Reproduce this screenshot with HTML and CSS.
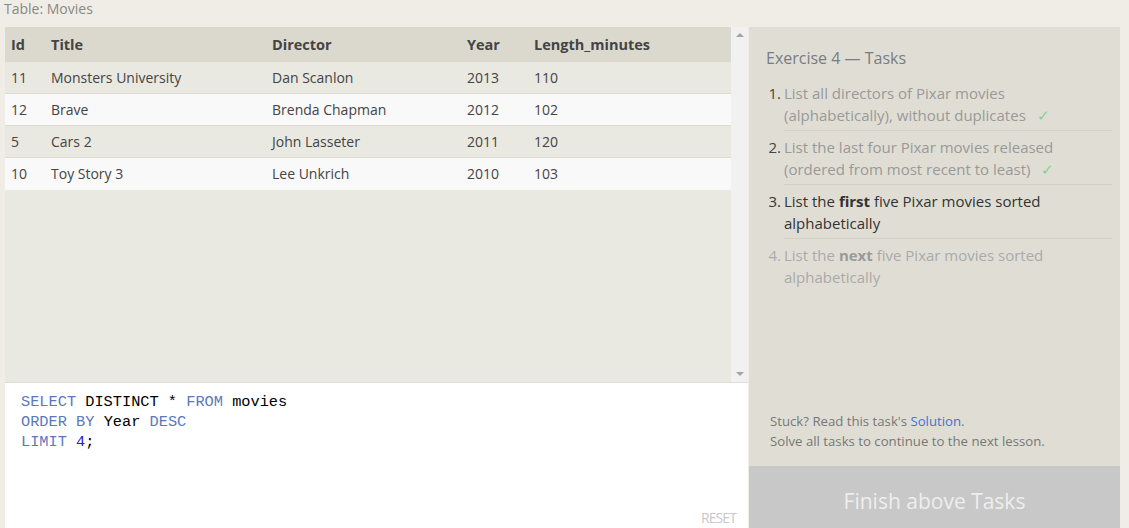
FILE: index.html
```html
<!DOCTYPE html>
<html>
<head>
<meta charset="utf-8">
<link rel="stylesheet" href="styles.css">
</head>
<body>
<div class="caption">Table: Movies</div>
<div class="main">
  <div class="left">
    <div class="table-area">
      <div class="table-scroll">
        <table class="data">
          <thead>
            <tr><th class="c-id">Id</th><th class="c-title">Title</th><th class="c-dir">Director</th><th class="c-year">Year</th><th>Length_minutes</th></tr>
          </thead>
          <tbody>
            <tr><td>11</td><td>Monsters University</td><td>Dan Scanlon</td><td>2013</td><td>110</td></tr>
            <tr><td>12</td><td>Brave</td><td>Brenda Chapman</td><td>2012</td><td>102</td></tr>
            <tr><td>5</td><td>Cars 2</td><td>John Lasseter</td><td>2011</td><td>120</td></tr>
            <tr><td>10</td><td>Toy Story 3</td><td>Lee Unkrich</td><td>2010</td><td>103</td></tr>
          </tbody>
        </table>
      </div>
      <div class="scrollbar">
        <span class="arrow up"></span>
        <span class="arrow down"></span>
      </div>
    </div>
    <div class="editor">
      <pre class="code"><span class="kw">SELECT</span> DISTINCT * <span class="kw">FROM</span> movies
<span class="kw">ORDER</span> <span class="kw">BY</span> Year <span class="kw">DESC</span>
<span class="kw">LIMIT</span> <span class="num">4</span>;</pre>
      <div class="reset">RESET</div>
    </div>
  </div>
  <div class="right">
    <div class="tasks">
      <h3 class="tasks-title">Exercise 4 — Tasks</h3>
      <ol class="task-list">
        <li class="done"><span class="n">1.</span><span class="t">List all directors of Pixar movies (alphabetically), without duplicates <span class="check">✓</span></span></li>
        <li class="done"><span class="n">2.</span><span class="t">List the last four Pixar movies released (ordered from most recent to least) <span class="check">✓</span></span></li>
        <li class="current"><span class="n">3.</span><span class="t">List the <b>first</b> five Pixar movies sorted alphabetically</span></li>
        <li class="todo"><span class="n">4.</span><span class="t">List the <b>next</b> five Pixar movies sorted alphabetically</span></li>
      </ol>
      <div class="help">
        <div>Stuck? Read this task's <a class="sol">Solution</a>.</div>
        <div>Solve all tasks to continue to the next lesson.</div>
      </div>
    </div>
    <div class="finish">Finish above Tasks</div>
  </div>
</div>
</body>
</html>
```

FILE: styles.css
```css
html, body {
  margin: 0;
  padding: 0;
  height: 100%;
}
body {
  background: #f0ede6;
  font-family: "Open Sans", "Noto Sans", sans-serif;
  color: #444;
  overflow: hidden;
}
.caption {
  height: 27px;
  line-height: 17px;
  padding-left: 4px;
  font-size: 14px;
  color: #888;
}
.main {
  display: flex;
  height: 501px;
  padding-left: 5px;
}
.left {
  width: 743px;
  display: flex;
  flex-direction: column;
}
.table-area {
  height: 355px;
  display: flex;
  background: #e9e8e1;
  border-bottom: 1px solid #dfded6;
}
.table-scroll {
  flex: 1;
}
.data {
  border-collapse: collapse;
  width: 100%;
  font-size: 14px;
}
.data th {
  background: #dbd9ce;
  text-align: left;
  vertical-align: top;
  font-weight: 700;
  font-size: 14.5px;
  line-height: 20px;
  height: 27px;
  padding: 8px 0 0 6px;
  color: #444;
}
.data td {
  vertical-align: top;
  line-height: 20px;
  height: 25px;
  padding: 6px 0 0 6px;
  border-bottom: 1px solid #dcdbd4;
  color: #444;
}
.data tbody tr:nth-child(odd) td { background: #e9e8e1; }
.data tbody tr:nth-child(even) td { background: #f9f9f9; }
.data tbody tr:last-child td { border-bottom: 0; height: 26px; }
.c-id { width: 34px; }
.c-title { width: 215px; }
.c-dir { width: 189px; }
.c-year { width: 61px; }
.scrollbar {
  width: 17px;
  background: #f1f1f1;
  display: flex;
  flex-direction: column;
  justify-content: space-between;
  align-items: center;
  padding: 6px 0;
  box-sizing: border-box;
}
.arrow {
  width: 0;
  height: 0;
  border-left: 4px solid transparent;
  border-right: 4px solid transparent;
}
.arrow.up { border-bottom: 4px solid #a3a3a3; }
.arrow.down { border-top: 4px solid #a3a3a3; }
.editor {
  flex: 1;
  background: #fff;
  position: relative;
}
.code {
  margin: 0;
  padding: 9px 0 0 16px;
  font-family: "Liberation Mono", monospace;
  font-size: 15.3px;
  line-height: 20px;
  color: #000;
}
.kw { color: #5b78bd; }
.num { color: #2a1ad4; }
.reset {
  position: absolute;
  right: 12px;
  bottom: 1px;
  font-size: 14px;
  color: #c8c8c8;
  letter-spacing: -0.9px;
}
.right {
  width: 371px;
  margin-left: 1px;
  display: flex;
  flex-direction: column;
}
.tasks {
  flex: 1;
  background: #e0ded4;
  padding: 20px 20px 0 17px;
  display: flex;
  flex-direction: column;
}
.tasks-title {
  margin: 0 0 13px 0;
  font-weight: 400;
  font-size: 16px;
  line-height: 22px;
  color: #777c85;
}
.task-list {
  list-style: none;
  margin: 0;
  padding: 0;
  font-size: 15px;
  line-height: 22px;
}
.task-list li {
  display: flex;
  padding: 0 0 5px 0;
  margin-bottom: 5px;
  position: relative;
}
.task-list .n {
  width: 15px;
  flex: none;
  text-align: right;
  margin-left: 0;
  margin-right: 3px;
}
.task-list li:not(:last-child)::after {
  content: "";
  position: absolute;
  left: 18px;
  right: -12px;
  bottom: 0;
  border-bottom: 1px solid #d2d0c6;
}
.task-list .done .n { color: #444; }
.task-list .done .t { color: #999; }
.task-list .current { color: #333; }
.task-list .current b { color: #333; }
.task-list .todo { color: #aaa; }
.task-list .todo b { color: #999; }
.check {
  color: #86cf93;
  margin-left: 7px;
}
.help {
  margin-top: auto;
  padding: 0 0 15px 4px;
  font-size: 13.2px;
  line-height: 20px;
  color: #777;
}
.sol { color: #3b73d9; }
.finish {
  height: 62px;
  box-sizing: border-box;
  padding-top: 7px;
  background: #c8c8c8;
  color: #eeeeee;
  font-size: 21px;
  display: flex;
  align-items: center;
  justify-content: center;
}
```
